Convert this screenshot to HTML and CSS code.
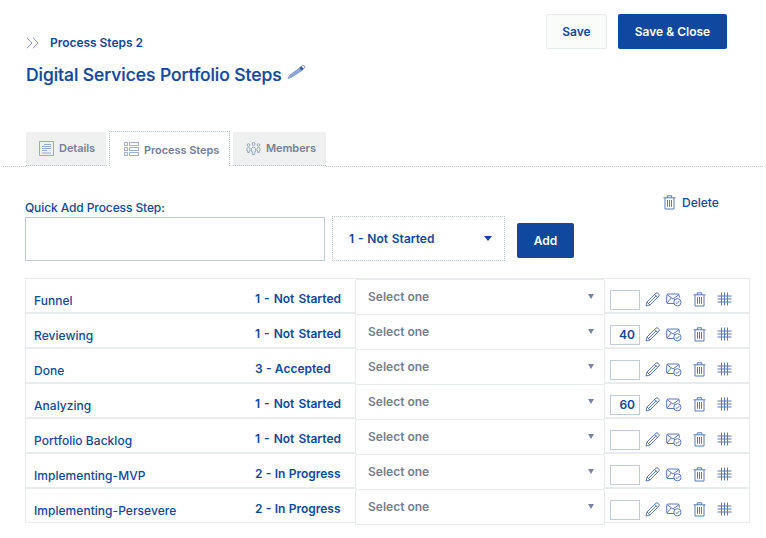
FILE: index.html
```html
<!DOCTYPE html>
<html lang="en">
<head>
<meta charset="utf-8">
<title>Process Steps</title>
<link rel="stylesheet" href="styles.css">
</head>
<body>
<svg class="defs" aria-hidden="true">
  <symbol id="pencil" viewBox="0 0 15 15"><path d="M1 14l1-4L11 1.2q1-1 2 0l.9 1q.9.9 0 1.8L5 13zM2 10l3 3M9.7 2.5l3 3M4 11l7.3-7.2"/></symbol>
  <symbol id="mail" viewBox="0 0 16 14"><path d="M8 10.5H1.8Q.7 10.5.7 9.5v-7Q.7 1 2 1h10q1.3 0 1.3 1.5v2.3M1 1.6L7 6l6-4.4M1 10l4.2-5M8 6l1 .8"/><circle cx="11.4" cy="9.3" r="3.6"/><path d="M9.7 9.3l1.3 1.3 2.4-2.6"/></symbol>
  <symbol id="trash" viewBox="0 0 13 15"><path d="M.5 2.8h12M4.3 2.8v-2h4.4v2M2 3v11h9V3M4.5 5v6.8M6.5 5v6.8M8.5 5v6.8"/></symbol>
  <symbol id="hash" viewBox="0 0 15 14"><path d="M.5 4h14M.5 7h14M.5 10h14M4.5.5v13M7.5.5v13M10.5.5v13"/></symbol>
</svg>
<header class="top">
  <div class="heading">
    <div class="crumb">
      <svg class="chev" viewBox="0 0 13 12"><path d="M1 .7L6 6l-5 5.3M7 .7L12 6l-5 5.3"/></svg>
      <span>Process Steps 2</span>
    </div>
    <div class="title-row">
      <h1>Digital Services Portfolio Steps</h1>
      <svg class="edit" viewBox="0 0 19 16"><path class="body" d="M1 14.5l2-3.500L12.5 4l2.500 2.500L5 13z"/><path class="tip" d="M12.500 4l1.500-1.500 2.500 2.300-1.700 1.500z"/><path class="end" d="M14 2.500q2-1.800 3.400-.6 1.100 1.300-.6 2.800"/></svg>
    </div>
  </div>
  <div class="buttons"><button class="btn light">Save</button><button class="btn primary">Save &amp; Close</button></div>
</header>
<nav class="tabs">
  <a class="tab details"><svg viewBox="0 0 15 15"><path d="M.5.5h14v14H.5zM3 12h9M5 3.500h7M3 5.500h9M3 7.500h9M3 9.500h5"/></svg>Details</a>
  <a class="tab active"><svg viewBox="0 0 15 15"><path d="M.5.5h3v3h-3zM5.500.5h9v3h-9zM.5 5.500h3v3h-3zM5.500 5.500h9v3h-9zM.5 10.500h3v3h-3zM5.500 10.500h9v3h-9z"/></svg>Process Steps</a>
  <a class="tab members"><svg viewBox="0 0 15 15"><circle cx="2.500" cy="4" r="1.300"/><circle cx="7.500" cy="3" r="1.500"/><circle cx="12.500" cy="4" r="1.300"/><path d="M1 10V7.500Q1 6.500 2.500 6.500T4 7.500V10H3.300v1.500H1.700V10zM11 10V7.500q0-1 1.500-1T14 7.500V10h-.7v1.500h-1.600V10zM5.500 10.500v-3q0-1.200 2-1.200t2 1.200v3h-.8v3H6.300v-3z"/></svg>Members</a>
</nav>
<main>
  <section class="quick">
    <label class="field"><span>Quick Add Process Step:</span><input type="text"></label>
    <div class="dropdown"><span>1 - Not Started</span><i></i></div>
    <button class="btn primary add">Add</button>
    <a class="delete"><svg><use href="#trash"/></svg>Delete</a>
  </section>
  <section class="steps">
    <div class="row"><div class="name"><b>Funnel</b><span>1 - Not Started</span></div><div class="select"><span>Select one</span><i></i></div><div class="tools"><span class="num"></span><svg class="p"><use href="#pencil"/></svg><svg class="m"><use href="#mail"/></svg><svg class="t"><use href="#trash"/></svg><svg class="h"><use href="#hash"/></svg></div></div>
    <div class="row"><div class="name"><b>Reviewing</b><span>1 - Not Started</span></div><div class="select"><span>Select one</span><i></i></div><div class="tools"><span class="num">40</span><svg class="p"><use href="#pencil"/></svg><svg class="m"><use href="#mail"/></svg><svg class="t"><use href="#trash"/></svg><svg class="h"><use href="#hash"/></svg></div></div>
    <div class="row"><div class="name"><b>Done</b><span>3 - Accepted</span></div><div class="select"><span>Select one</span><i></i></div><div class="tools"><span class="num"></span><svg class="p"><use href="#pencil"/></svg><svg class="m"><use href="#mail"/></svg><svg class="t"><use href="#trash"/></svg><svg class="h"><use href="#hash"/></svg></div></div>
    <div class="row"><div class="name"><b>Analyzing</b><span>1 - Not Started</span></div><div class="select"><span>Select one</span><i></i></div><div class="tools"><span class="num">60</span><svg class="p"><use href="#pencil"/></svg><svg class="m"><use href="#mail"/></svg><svg class="t"><use href="#trash"/></svg><svg class="h"><use href="#hash"/></svg></div></div>
    <div class="row"><div class="name"><b>Portfolio Backlog</b><span>1 - Not Started</span></div><div class="select"><span>Select one</span><i></i></div><div class="tools"><span class="num"></span><svg class="p"><use href="#pencil"/></svg><svg class="m"><use href="#mail"/></svg><svg class="t"><use href="#trash"/></svg><svg class="h"><use href="#hash"/></svg></div></div>
    <div class="row"><div class="name"><b>Implementing-MVP</b><span>2 - In Progress</span></div><div class="select"><span>Select one</span><i></i></div><div class="tools"><span class="num"></span><svg class="p"><use href="#pencil"/></svg><svg class="m"><use href="#mail"/></svg><svg class="t"><use href="#trash"/></svg><svg class="h"><use href="#hash"/></svg></div></div>
    <div class="row"><div class="name"><b>Implementing-Persevere</b><span>2 - In Progress</span></div><div class="select"><span>Select one</span><i></i></div><div class="tools"><span class="num"></span><svg class="p"><use href="#pencil"/></svg><svg class="m"><use href="#mail"/></svg><svg class="t"><use href="#trash"/></svg><svg class="h"><use href="#hash"/></svg></div></div>
  </section>
</main>
</body>
</html>
```
FILE: styles.css
```css
* { box-sizing: border-box; }
body {
  margin: 0;
  width: 766px;
  height: 538px;
  overflow: hidden;
  background: #fff;
  color: #1048a0;
  font: 500 12px/16px Inter, "Liberation Sans", sans-serif;
}
svg { display: block; flex: none; fill: none; stroke: #5878b8; stroke-width: 1; }
.defs { position: absolute; width: 0; height: 0; }
button, input { font: inherit; }

.top { display: flex; justify-content: space-between; height: 131px; padding: 14px 39px 0 26px; }
.heading { padding-top: 21px; }
.crumb { display: flex; align-items: center; height: 16px; font-weight: 600; letter-spacing: -0.03px; }
.chev { width: 13px; height: 12px; margin-right: 11px; stroke: #8098c8; }
.title-row { display: flex; align-items: center; margin-top: 12px; height: 24px; }
h1 { margin: 0; font-size: 17.5px; font-weight: 500; line-height: 24px; letter-spacing: -0.06px; white-space: nowrap; -webkit-text-stroke: 0.2px #1048a0; }
.edit { width: 19px; height: 16px; margin: -6px 0 0 5px; }
.edit .body { fill: #91a7d2; stroke: #8ca2d0; stroke-width: 1; }
.edit .tip { fill: #2858a8; stroke: #2858a8; stroke-width: .6; }
.edit .end { stroke-width: .8; }
.buttons { display: flex; gap: 11px; }
.btn { height: 35px; padding: 0; border: 0; border-radius: 2px; font-weight: 600; }
.light { width: 61px; border: 1px solid #e8ebee; background: #fafcfa; color: #1048a0; }
.primary { width: 109px; background: #1048a0; color: #fff; }

.tabs { display: flex; align-items: flex-start; height: 35px; margin: 0 3px; color: #74809a; font-weight: 600; }
.tabs::before { content: ""; width: 23px; height: 35px; border-bottom: 1px dotted #b5c0c8; }
.tabs::after { content: ""; flex: 1; height: 35px; border-bottom: 1px dotted #b5c0c8; }
.tab { display: flex; align-items: center; height: 35px; border-bottom: 1px dotted #b5c0c8; border-top: 1px solid #fff; background: #eff1f1; font-size: 11px; letter-spacing: -0.06px; }
.tab { padding-bottom: 1px; }
.tab svg { width: 15px; height: 15px; stroke: #8298c6; stroke-width: .8; }
.details { width: 83px; padding-left: 13px; gap: 5px; border-right: 3px solid #fff; }
.active { width: 121px; padding: 1px 0 0 14px; gap: 5px; background: #fff; border: 1px dotted #b5c0c8; border-bottom: 0; }
.members { width: 96px; padding-left: 13px; gap: 5px; border-left: 3px solid #fff; }

.quick { display: flex; height: 112px; padding: 34px 0 0 25px; }
.field { width: 300px; }
.field span { display: block; height: 17px; line-height: 16px; letter-spacing: -0.1px; }
.field input { display: block; width: 300px; height: 44px; border: 1px solid #bfcbdf; background: #fff; }
.dropdown { display: flex; align-items: center; justify-content: space-between; width: 173px; height: 45px; margin: 16px 0 0 7px; padding: 0 12px 0 16px; border: 1px dotted #b9c5d3; font-weight: 600; word-spacing: .8px; }
.dropdown i { border: 4px solid transparent; border-top: 5px solid #1048a0; border-bottom: 0; }
.add { width: 57px; margin: 23px 0 0 12px; }
.delete { display: flex; align-items: center; height: 16px; margin: -5px 0 0 89px; }
.delete svg { width: 13px; height: 15px; margin: -1px 6px 0 0; }

.steps { width: 725px; margin-left: 25px; border-top: 1px solid #e8ebeb; }
.row { display: grid; grid-template-columns: 330px 250px 145px; height: 35px; }
.name, .tools { display: flex; height: 35px; border-bottom: 2px solid #e9ecec; }
.name { border-left: 1px solid #e8ebeb; padding-left: 8px; justify-content: space-between; }
.name b { font-weight: 500; padding-top: 14px; letter-spacing: 0.04px; }
.name span { width: 100px; padding-top: 12px; font-weight: 600; white-space: nowrap; word-spacing: 1px; }
.row:nth-child(n+6) .name span, .row:nth-child(3) .name span { word-spacing: 0.3px; }
.select { display: flex; justify-content: space-between; height: 36px; padding: 9px 10px 0 12px; border: 1px solid #e8ebeb; border-radius: 2px; color: #747f90; font-weight: 600; }
.select i { margin-top: 5px; height: 0; border: 3.5px solid transparent; border-top: 5px solid #7885a0; border-bottom: 0; }
.tools { border-right: 1px solid #e8ebeb; padding-left: 5px; }
.num { width: 30px; height: 20px; margin-top: 11px; padding-right: 4px; border: 1px solid #bfcbdf; text-align: right; font: 600 12px/18px Inter, sans-serif; }
.p { width: 15px; height: 15px; margin: 12.5px 0 0 5px; }
.m { width: 16px; height: 14px; margin: 14px 0 0 6px; }
.t { width: 13px; height: 15px; margin: 12.5px 0 0 11px; }
.h { width: 15px; height: 14px; margin: 13px 0 0 11px; }
.row:last-child .name, .row:last-child .tools { height: 34px; border-bottom-width: 1px; }
```
